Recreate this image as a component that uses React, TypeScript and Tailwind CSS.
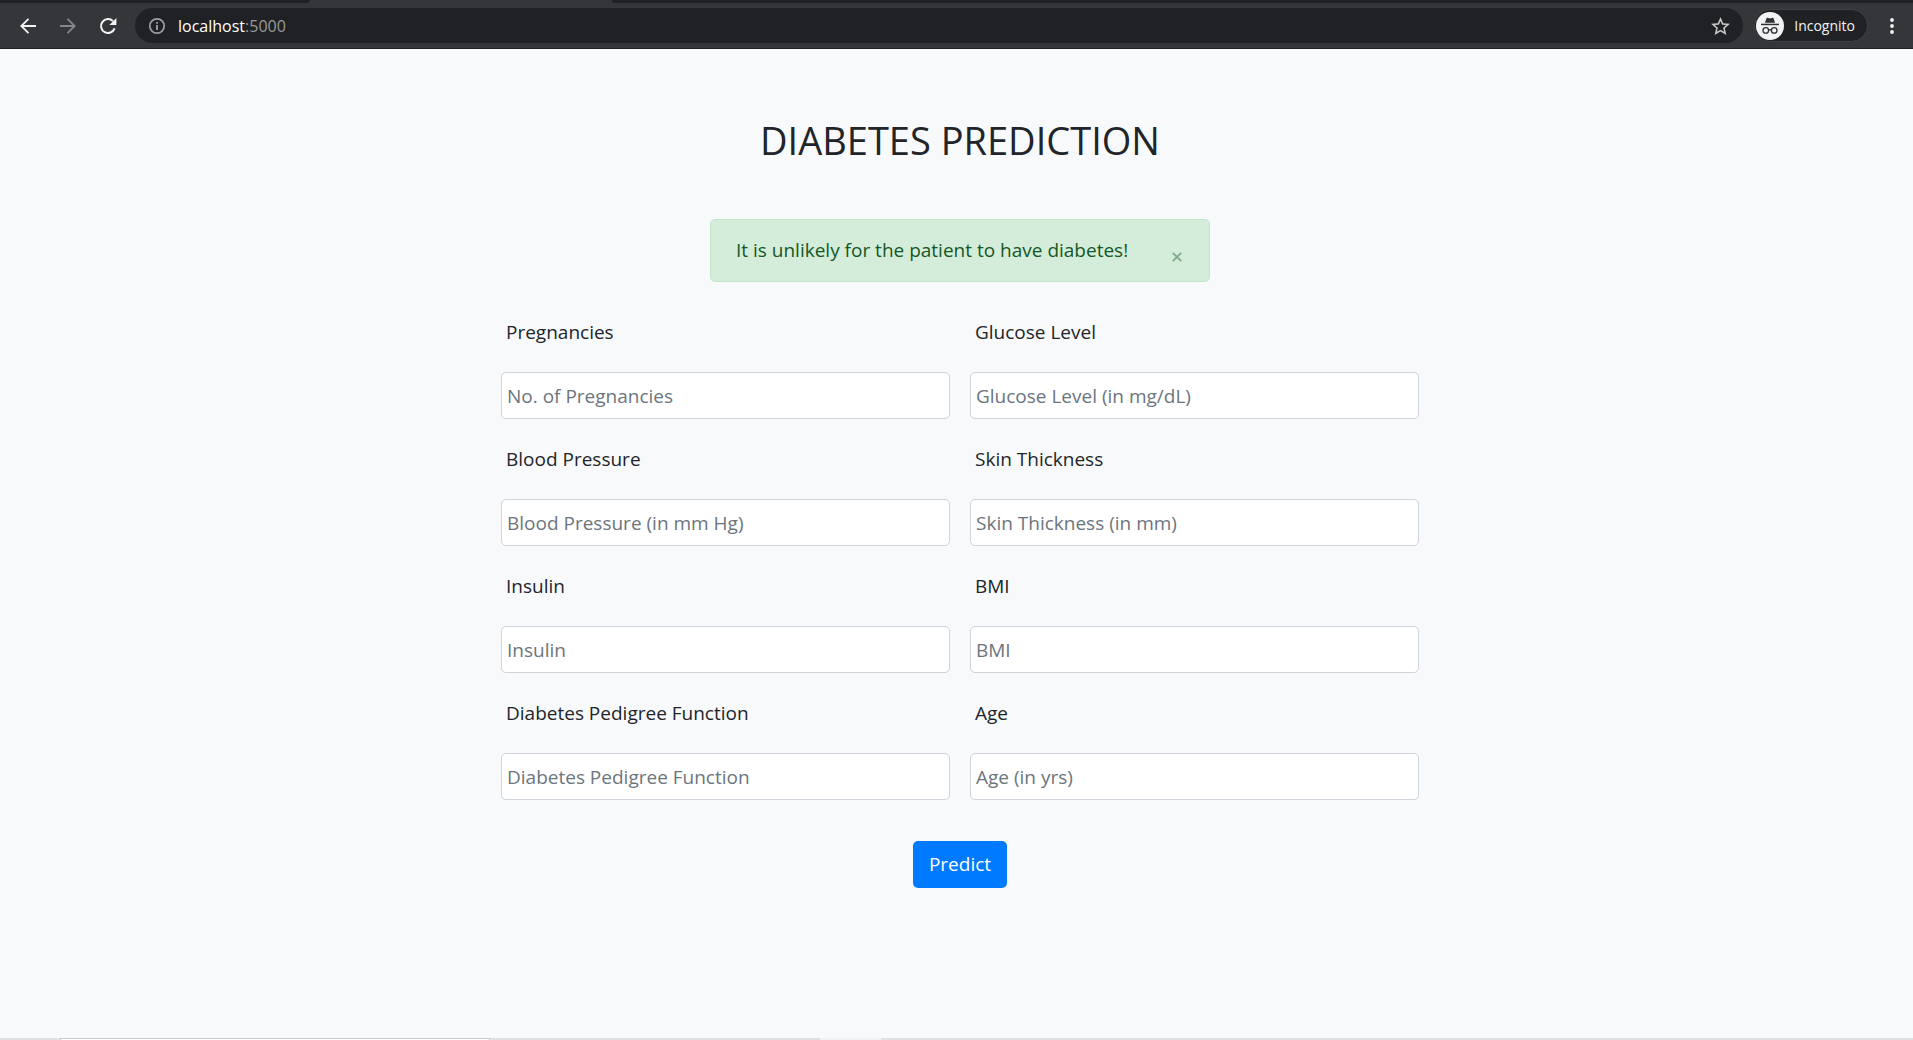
import { useState } from "react";

type Field = { id: string; label: string; placeholder: string };

const FIELDS: Field[] = [
  { id: "pregnancies", label: "Pregnancies", placeholder: "No. of Pregnancies" },
  { id: "glucose", label: "Glucose Level", placeholder: "Glucose Level (in mg/dL)" },
  { id: "blood-pressure", label: "Blood Pressure", placeholder: "Blood Pressure (in mm Hg)" },
  { id: "skin-thickness", label: "Skin Thickness", placeholder: "Skin Thickness (in mm)" },
  { id: "insulin", label: "Insulin", placeholder: "Insulin" },
  { id: "bmi", label: "BMI", placeholder: "BMI" },
  { id: "pedigree", label: "Diabetes Pedigree Function", placeholder: "Diabetes Pedigree Function" },
  { id: "age", label: "Age", placeholder: "Age (in yrs)" },
];

function ArrowIcon({ className = "" }: { className?: string }) {
  return (
    <svg viewBox="0 0 18 18" className={`size-[18px] ${className}`} fill="none" stroke="currentColor" strokeWidth="1.8">
      <path d="M17 9H2.5M9.5 1.8 2.3 9l7.2 7.2" />
    </svg>
  );
}

function ReloadIcon() {
  return (
    <svg viewBox="0 0 18 18" className="size-[18px]" fill="none">
      <path d="M15.6 11.4A7 7 0 1 1 14 4.1" stroke="currentColor" strokeWidth="2" />
      <path d="M17.4 .9v7h-7z" fill="currentColor" />
    </svg>
  );
}

function InfoIcon() {
  return (
    <svg viewBox="0 0 18 18" className="size-[18px] shrink-0 text-[#9aa0a6]" fill="none">
      <circle cx="9" cy="9" r="7.2" stroke="currentColor" strokeWidth="1.7" />
      <path d="M8.1 8h1.8v5H8.1zM8.1 4.9h1.8v1.8H8.1z" fill="currentColor" />
    </svg>
  );
}

function StarIcon() {
  return (
    <svg viewBox="2 2 20 19" className="h-[18px] w-[19px]" fill="currentColor">
      <path d="M22 9.24l-7.19-.62L12 2 9.19 8.63 2 9.24l5.46 4.73L5.82 21 12 17.27 18.18 21l-1.63-7.03L22 9.24zM12 15.4l-3.76 2.27 1-4.28-3.32-2.88 4.38-.38L12 6.1l1.71 4.04 4.38.38-3.32 2.88 1 4.28L12 15.4z" />
    </svg>
  );
}

function IncognitoIcon() {
  return (
    <svg viewBox="0 0 28 28" className="size-7 shrink-0">
      <circle cx="14" cy="14" r="14" fill="#f1f3f4" />
      <g fill="#303134">
        <path d="M8.9 10.7 10.4 6.4c.2-.6.8-.8 1.3-.6l2.3.6 2.3-.6c.5-.2 1.1 0 1.3.6l1.5 4.3z" />
        <path d="M5 11.7h18v1.5H5z" />
      </g>
      <g fill="none" stroke="#303134" strokeWidth="1.3">
        <circle cx="9.8" cy="18.4" r="2.8" />
        <circle cx="18.2" cy="18.4" r="2.8" />
        <path d="M12.6 18.2c.9-.7 1.9-.7 2.8 0" />
      </g>
    </svg>
  );
}

function DotsIcon() {
  return (
    <svg viewBox="0 0 4 16" className="h-4 w-1" fill="currentColor">
      <circle cx="2" cy="2" r="1.9" />
      <circle cx="2" cy="8" r="1.9" />
      <circle cx="2" cy="14" r="1.9" />
    </svg>
  );
}

function BrowserBar() {
  return (
    <header className="border-b border-[#202124] bg-[#35363a] text-[#f1f3f4]">
      <div className="flex h-[3px]">
        <div className="w-[310px] rounded-br-md bg-[#202124]" />
        <div className="w-[302px]" />
        <div className="flex-1 rounded-bl-md bg-[#202124]" />
      </div>
      <div className="flex h-[45px] items-center">
        <div className="flex w-[135px] shrink-0 items-center gap-[22px] pl-[19px]">
          <button type="button" aria-label="Back"><ArrowIcon /></button>
          <button type="button" aria-label="Forward" className="text-[#84868a]">
            <ArrowIcon className="rotate-180" />
          </button>
          <button type="button" aria-label="Reload"><ReloadIcon /></button>
        </div>
        <div className="flex h-[35px] flex-1 items-center rounded-full bg-[#202124] px-[13px]">
          <InfoIcon />
          <a href="#" className="ml-3 flex-1 text-[16px] leading-6 text-white">
            localhost<span className="text-[#9a9a9a]">:5000</span>
          </a>
          <button type="button" aria-label="Bookmark this page" className="text-[#c8c9cb]"><StarIcon /></button>
        </div>
        <button
          type="button"
          className="ml-[11px] flex h-[33px] items-center gap-[10px] rounded-full border border-[#404144] bg-[#202124] pr-3 pl-px text-[14px] leading-5"
        >
          <IncognitoIcon />
          Incognito
        </button>
        <button type="button" aria-label="Menu" className="mr-[19px] ml-[22px]"><DotsIcon /></button>
      </div>
    </header>
  );
}

export default function App() {
  const [alertOpen, setAlertOpen] = useState(true);

  return (
    <div className="flex min-h-screen flex-col bg-[#f8f9fb] font-['Open_Sans','Noto_Sans',sans-serif] text-[#212529]">
      <BrowserBar />
      <main className="flex flex-1 flex-col items-center pt-[67px] pl-[7px]">
        <h1 className="text-[38px] leading-[48px]">DIABETES PREDICTION</h1>
        {alertOpen && (
          <div
            role="alert"
            className="mt-[55px] flex h-[63px] w-[500px] max-w-full items-center justify-between rounded-[5px] border border-[#c3e6cb] bg-[#d4edda] pr-[26px] pl-[25px] text-[19px] text-[#155724]"
          >
            <p>It is unlikely for the patient to have diabetes!</p>
            <button type="button" aria-label="Close" onClick={() => setAlertOpen(false)} className="pt-3 text-[#7fa98a]">
              <svg viewBox="0 0 12 12" className="size-3" fill="none" stroke="currentColor" strokeWidth="1.8">
                <path d="m1.8 1.8 8.4 8.4m0-8.4-8.4 8.4" />
              </svg>
            </button>
          </div>
        )}
        <form
          className="mt-[35px] flex w-[918px] max-w-full flex-col items-center text-[19px]"
          onSubmit={(e) => e.preventDefault()}
        >
          <div className="grid w-full grid-cols-2 gap-x-5 gap-y-[25px]">
            {FIELDS.map((f) => (
              <div key={f.id} className="flex flex-col gap-[25px]">
                <label htmlFor={f.id} className="px-[5px] leading-[30px]">{f.label}</label>
                <input
                  id={f.id}
                  type="text"
                  placeholder={f.placeholder}
                  className="h-[47px] w-full rounded-[5px] border border-[#ced4da] bg-white px-[5px] pt-px placeholder:text-[#6c757d]"
                />
              </div>
            ))}
          </div>
          <button type="submit" className="mt-[41px] h-[47px] rounded-[5px] bg-[#007bff] px-4 text-white">
            Predict
          </button>
        </form>
      </main>
      <footer className="flex h-[2px] bg-[#e1e1e1]">
        <div className="ml-[60px] w-[430px] border border-b-0 border-[#c8c8c8] bg-white" />
        <div className="ml-[330px] w-[61px] bg-[#f2f2f2]" />
      </footer>
    </div>
  );
}
